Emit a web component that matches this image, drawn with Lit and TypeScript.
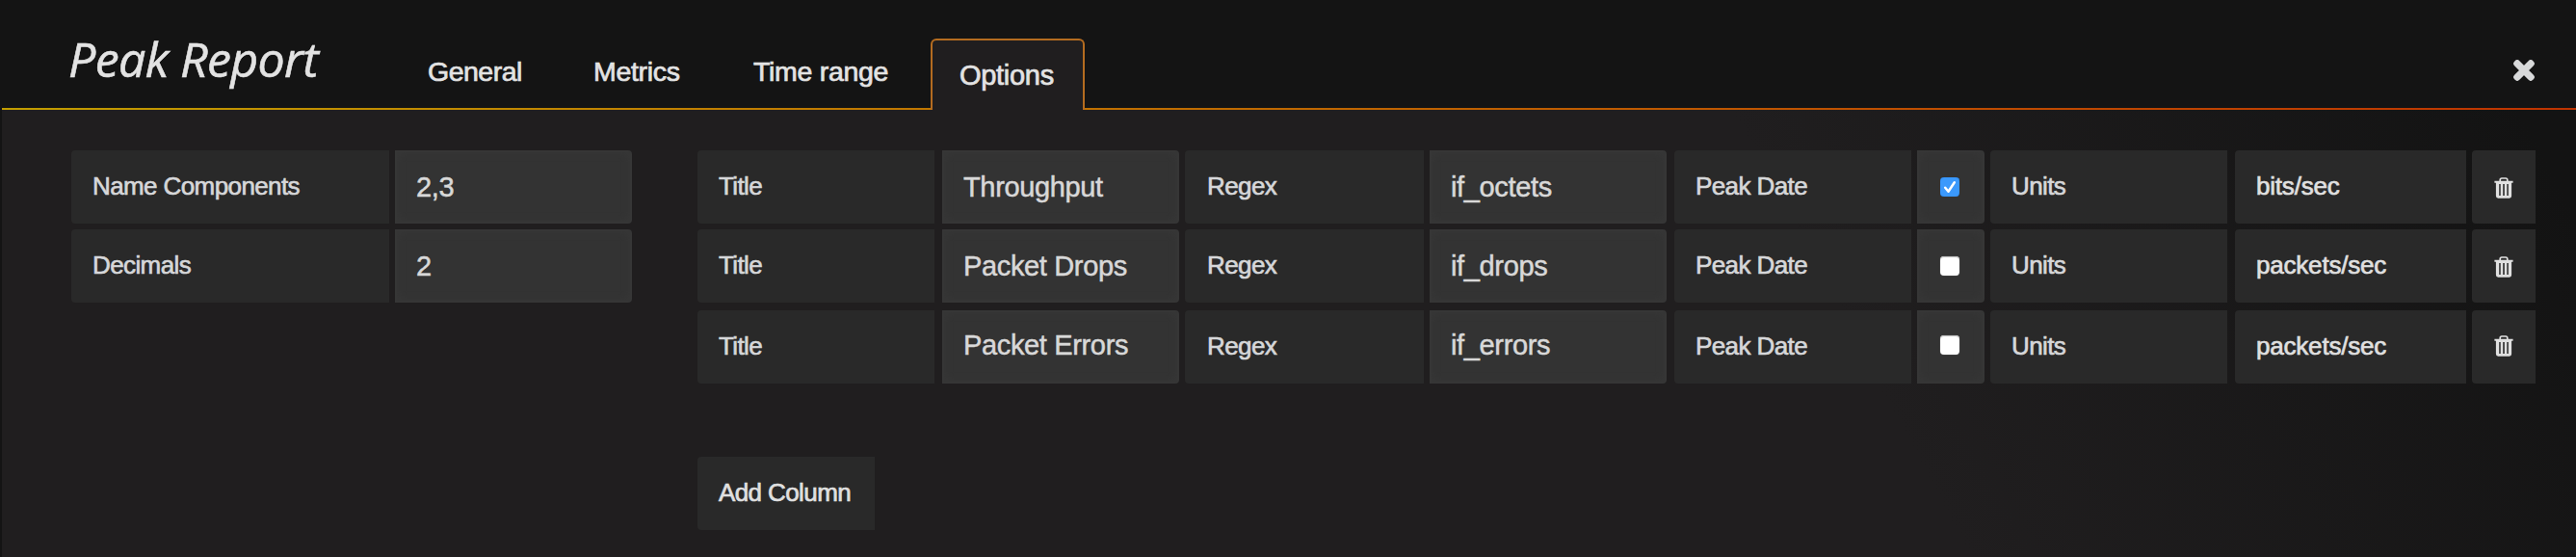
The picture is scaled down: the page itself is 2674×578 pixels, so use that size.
import { LitElement, html, css, svg } from "lit";
import { customElement, state } from "lit/decorators.js";
import { classMap } from "lit/directives/class-map.js";

interface ReportColumn {
  title: string;
  regex: string;
  peakDate: boolean;
  units: string;
}

const trashIcon = svg`
  <svg class="trash" viewBox="0 0 20 22" width="20" height="22" aria-hidden="true">
    <path fill="none" stroke="currentColor" stroke-width="1.7" d="M6.2 4V2.9Q6.2 1 8 1h4q1.8 0 1.8 1.9V4" />
    <path fill="currentColor" fill-rule="evenodd" d="M0.4 3.7h19.2v2h-1.5v13.6q0 2.4-2.3 2.4H4.2q-2.3 0-2.3-2.4V5.7H0.4zM5.2 7v12h1.5V7zM9.2 7v12h1.6V7zM13.3 7v12h1.5V7z" />
  </svg>`;

const closeIcon = svg`
  <svg class="close" viewBox="0 0 24 24" width="24" height="24" aria-hidden="true">
    <path d="M5 5L19 19M19 5L5 19" fill="none" stroke="currentColor" stroke-width="7.4" stroke-linecap="round" />
    <path d="M5 5L19 19M19 5L5 19" fill="none" stroke="currentColor" stroke-width="5.6" stroke-linecap="square" />
  </svg>`;

@customElement("app-root")
export class AppRoot extends LitElement {
  static styles = css`
    :host {
      display: block;
      box-sizing: border-box;
      height: 578px;
      overflow: hidden;
      background: #141414;
      color: #d6d7d9;
      font-family: "Liberation Sans", Arial, sans-serif;
    }
    * { box-sizing: border-box; }
    .header {
      display: flex;
      height: 114px;
      margin-left: 2px;
      padding: 0 42px 0 69px;
      color: #e3e3e3;
      background: linear-gradient(to right, #c29d00, #be3400) bottom / 100% 2px no-repeat;
    }
    .title {
      width: 340px;
      margin: 0;
      padding-top: 26px;
      font: italic 400 50px/70px "Open Sans", sans-serif;
      letter-spacing: -0.6px;
      -webkit-text-stroke: 0.6px;
      white-space: nowrap;
    }
    .tabs {
      display: flex;
      flex: 1;
      align-items: flex-end;
    }
    .tab {
      height: 74px;
      padding: 17px 0 0 33px;
      font-size: 28.5px;
      line-height: 34px;
      letter-spacing: -0.3px;
      white-space: nowrap;
      -webkit-text-stroke: 0.7px;
    }
    .general { width: 172px; letter-spacing: -0.5px; }
    .metrics { width: 166px; }
    .time { width: 217px; }
    .active {
      width: 160px;
      padding: 19px 0 0 28px;
      border: 2px solid #b46c20;
      border-bottom: 0;
      border-radius: 6px 6px 0 0;
      background: #201e1f;
      font-size: 29px;
    }
    .close {
      margin-top: 61px;
      color: #d8d9da;
    }
    .body {
      display: flex;
      gap: 68px;
      height: 464px;
      margin-left: 2px;
      padding: 42px 40px 0 72px;
      background: linear-gradient(62deg, #201e1f 70%, #131313 98%);
    }
    .rows {
      display: grid;
      gap: 6px;
      align-content: start;
    }
    .row {
      display: flex;
      gap: 6px;
    }
    .row.last {
      margin-top: 2px;
    }
    .label, .button, .field {
      height: 76px;
      font-size: 26px;
      letter-spacing: -0.6px;
      line-height: 30px;
      white-space: nowrap;
      -webkit-text-stroke: 0.65px;
    }
    .label, .button {
      display: block;
      padding: 22px 0 0 22px;
      background: #292929;
      border-radius: 4px 0 0 4px;
    }
    .button {
      margin: 0;
      border: 0;
      color: #e0e0e0;
      font-family: inherit;
      text-align: left;
      padding-bottom: 24px;
    }
    .field {
      width: 246px;
      padding: 20px 0 20px 20px;
      border: 2px solid #363636;
      border-radius: 0 4px 4px 0;
      background: #333;
      box-shadow: inset 0 0 8px #383838;
      color: #d8d8d8;
      font-family: inherit;
      font-size: 29px;
      letter-spacing: -0.35px;
      line-height: 32px;
      outline: none;
      -webkit-text-stroke: 0.5px;
    }
    .row.last .field { padding-top: 18px; padding-bottom: 22px; }
    .wide { width: 330px; }
    .cell { width: 246px; }
    .cell.regex { width: 248px; padding-left: 23px; }
    .after { margin-left: 2px; }
    .field.check {
      display: grid;
      width: 70px;
      padding: 26px 22px;
      align-content: start;
      justify-content: start;
    }
    .row.last .field.check { padding: 24px 22px; }
    .box {
      width: 20px;
      height: 20px;
      border-radius: 4px;
      background: #fff;
      box-shadow: inset 0 1px 1px #bbb, 0 0 1px #999;
    }
    .box.on {
      background: #3b99fc;
      box-shadow: inset 0 0 1px #1a7ff0;
    }
    .box svg { display: block; }
    .unit {
      width: 240px;
      letter-spacing: -0.2px;
    }
    .remove {
      display: grid;
      width: 66px;
      padding: 28px 0 0 23px;
      align-content: start;
    }
    .row.last .remove { padding-top: 26px; }
    .add {
      width: 184px;
      margin-top: 70px;
    }
  `;

  @state() private columns: ReportColumn[] = [
    { title: "Throughput", regex: "if_octets", peakDate: true, units: "bits/sec" },
    { title: "Packet Drops", regex: "if_drops", peakDate: false, units: "packets/sec" },
    { title: "Packet Errors", regex: "if_errors", peakDate: false, units: "packets/sec" },
  ];

  private toggle(index: number) {
    this.columns = this.columns.map((c, i) => (i === index ? { ...c, peakDate: !c.peakDate } : c));
  }

  private remove(index: number) {
    this.columns = this.columns.filter((_, i) => i !== index);
  }

  private add() {
    this.columns = [...this.columns, { title: "", regex: "", peakDate: false, units: "" }];
  }

  private renderColumn(c: ReportColumn, i: number) {
    return html`
      <div class=${classMap({ row: true, last: i === 2 })}>
        <div class="label cell">Title</div>
        <input class="field after" .value=${c.title} />
        <div class="label cell regex">Regex</div>
        <input class="field" .value=${c.regex} />
        <div class="label cell after">Peak Date</div>
        <div class="field check" @click=${() => this.toggle(i)}>
          <div class=${classMap({ box: true, on: c.peakDate })}>
            ${c.peakDate
              ? html`<svg viewBox="0 0 20 20" width="20" height="20">
                  <path d="M5.2 10.8L8.5 14.7L14.8 5.2" fill="none" stroke="#fff" stroke-width="2.5" stroke-linecap="round" stroke-linejoin="round" />
                </svg>`
              : null}
          </div>
        </div>
        <div class="label cell">Units</div>
        <button class="button unit after">${c.units}</button>
        <button class="button remove" @click=${() => this.remove(i)}>${trashIcon}</button>
      </div>`;
  }

  render() {
    return html`
      <header class="header">
        <h1 class="title">Peak Report</h1>
        <nav class="tabs">
          <div class="tab general">General</div>
          <div class="tab metrics">Metrics</div>
          <div class="tab time">Time range</div>
          <div class="tab active">Options</div>
        </nav>
        ${closeIcon}
      </header>
      <main class="body">
        <section class="rows">
          <div class="row">
            <div class="label wide">Name Components</div>
            <input class="field" value="2,3" />
          </div>
          <div class="row">
            <div class="label wide">Decimals</div>
            <input class="field" value="2" />
          </div>
        </section>
        <section class="rows">
          ${this.columns.map((c, i) => this.renderColumn(c, i))}
          <button class="button add" @click=${this.add}>Add Column</button>
        </section>
      </main>`;
  }
}
